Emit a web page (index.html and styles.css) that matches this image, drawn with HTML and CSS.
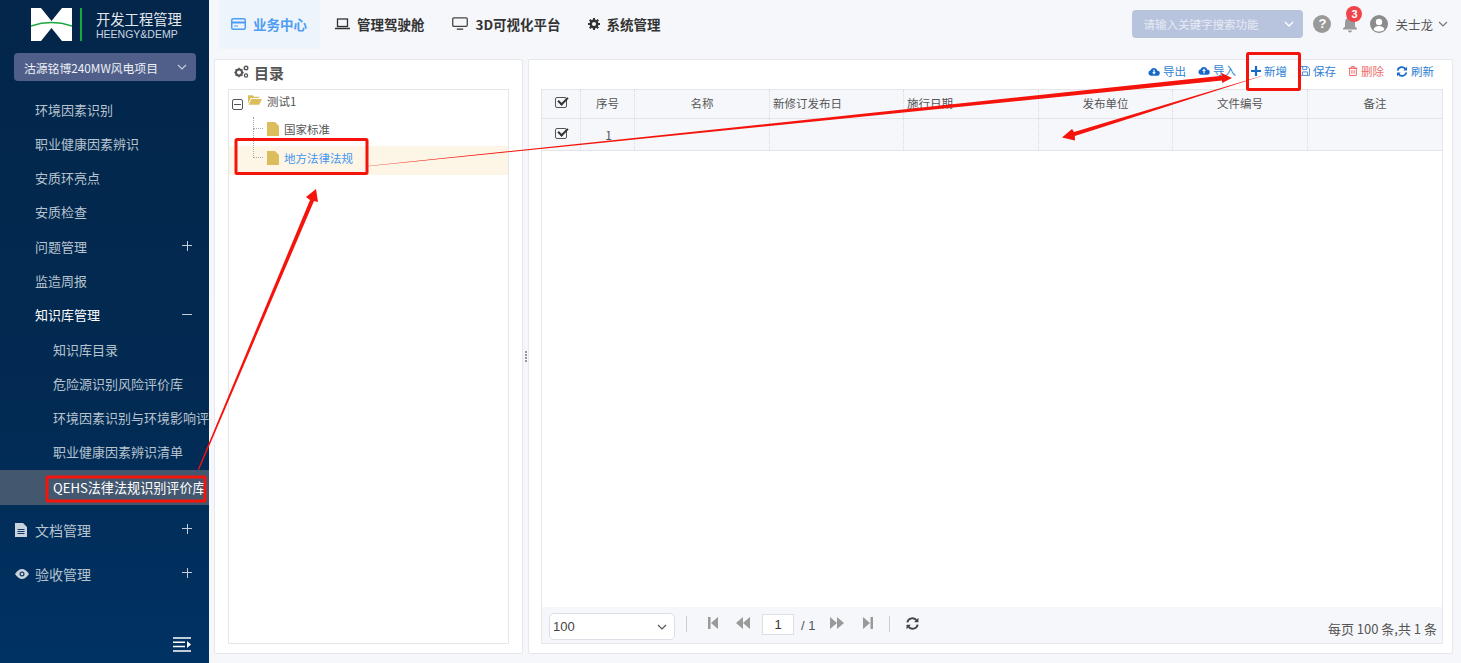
FILE: index.html
```html
<!DOCTYPE html>
<html lang="zh">
<head>
<meta charset="utf-8">
<title>开发工程管理</title>
<link rel="stylesheet" href="styles.css">
</head>
<body>
<div class="app">
  <aside class="sidebar">
    <div class="brand">
      <svg class="logo" viewBox="0 0 41 33"><path fill="#fff" d="M0 0h10l10.500 13L31 0h10v33H31L20.500 20 10 33H0z"/><path fill="none" stroke="#19a83c" stroke-width="1.500" d="M0 18Q20.500 11 41 18"/></svg>
      <span class="brand-bar"></span>
      <div class="brand-text"><div class="brand-cn">开发工程管理</div><div class="brand-en">HEENGY&amp;DEMP</div></div>
    </div>
    <div class="project"><span>沽源铭博240MW风电项目</span><svg class="chev" viewBox="0 0 10 6"><path d="M1 1l4 4 4-4" fill="none" stroke="#c5cce0" stroke-width="1.200"/></svg></div>
    <nav class="menu">
      <div class="mi">环境因素识别</div>
      <div class="mi">职业健康因素辨识</div>
      <div class="mi">安质环亮点</div>
      <div class="mi">安质检查</div>
      <div class="mi">问题管理<span class="sign plus"></span></div>
      <div class="mi">监造周报</div>
      <div class="mi open">知识库管理<span class="sign minus-sign"></span></div>
      <div class="mi sub">知识库目录</div>
      <div class="mi sub">危险源识别风险评价库</div>
      <div class="mi sub">环境因素识别与环境影响评</div>
      <div class="mi sub">职业健康因素辨识清单</div>
      <div class="mi sub active">QEHS法律法规识别评价库</div>
      <div class="mi top"><svg class="mi-ico" viewBox="0 0 12 14"><path fill="#c9d3de" d="M0 0h8l4 4v10H0z"/><path stroke="#143a63" d="M2.500 6.500h7M2.500 8.500h7M2.500 10.500h7"/></svg>文档管理<span class="sign plus"></span></div>
      <div class="mi top second"><svg class="mi-ico eye" viewBox="0 0 14 10"><path fill="#c9d3de" d="M0 5q7-10 14 0q-7 10-14 0z"/><circle cx="7" cy="5" r="2.500" fill="#143a63"/><circle cx="7" cy="5" r="1.300" fill="#c9d3de"/></svg>验收管理<span class="sign plus"></span></div>
    </nav>
    <svg class="collapse" viewBox="0 0 18 15"><path stroke="#fff" stroke-width="1.500" d="M0 1h18M0 5.300h12M0 9.600h12M0 14h18"/><path fill="#fff" d="M14 4l4 3.500-4 3.500z"/></svg>
  </aside>
  <div class="main">
    <header class="topbar">
      <div class="tab current"><svg class="tab-ico" viewBox="0 0 15 12"><rect x=".75" y=".75" width="13.500" height="10.500" rx="1.500" fill="none" stroke="#4d9df5" stroke-width="1.500"/><path stroke="#4d9df5" stroke-width="2" d="M1 4.500h13"/><path stroke="#4d9df5" d="M3 8h4"/></svg>业务中心</div>
      <div class="tab"><svg class="tab-ico" viewBox="0 0 15 12"><rect x="2.500" y="1" width="10" height="7.500" fill="none" stroke="#333" stroke-width="1.300"/><path stroke="#333" stroke-width="1.500" d="M0 10.500h15"/></svg>管理驾驶舱</div>
      <div class="tab"><svg class="tab-ico mon" viewBox="0 0 15 12"><rect x=".7" y=".7" width="13.600" height="8" rx="1" fill="none" stroke="#444" stroke-width="1.200"/><path stroke="#444" stroke-width="1.300" d="M4.500 11.300h6"/></svg>3D可视化平台</div>
      <div class="tab"><svg class="tab-ico gear" viewBox="0 0 14 14"><circle cx="7" cy="7" r="3.800" fill="none" stroke="#333" stroke-width="2.800"/><path stroke="#333" stroke-width="2.400" d="M7 0v2.500M7 11.500V14M0 7h2.500M11.500 7H14M2 2l2 2M10 10l2 2M12 2l-2 2M4 10l-2 2"/></svg>系统管理</div>
      <div class="tools">
        <div class="search"><span>请输入关键字搜索功能</span><svg class="chev" viewBox="0 0 10 6"><path d="M1 1l4 4 4-4" fill="none" stroke="#fff" stroke-width="1.300"/></svg></div>
        <span class="help">?</span>
        <div class="bell"><svg viewBox="0 0 16 18"><path fill="#9a9a9a" d="M8 1a1.500 1.500 0 0 1 1.500 1.500C12 3.300 13 5.500 13 8v3.500l2 2v1H1v-1l2-2V8c0-2.500 1-4.700 3.500-5.500A1.500 1.500 0 0 1 8 1zM6 15.500h4a2 2 0 0 1-4 0z"/></svg><span class="badge">3</span></div>
        <svg class="avatar" viewBox="0 0 18 18"><circle cx="9" cy="9" r="9" fill="#8c8c8c"/><circle cx="9" cy="7" r="3.200" fill="#fff"/><path fill="#fff" d="M3.500 14.500c1-3 3-3.500 5.500-3.500s4.500.5 5.500 3.500C13 16 11 16.500 9 16.500S5 16 3.500 14.500z"/></svg>
        <span class="uname">关士龙</span>
        <svg class="chev" viewBox="0 0 10 6"><path d="M1 1l4 4 4-4" fill="none" stroke="#777" stroke-width="1.200"/></svg>
      </div>
    </header>
    <div class="content">
      <section class="panel left">
        <div class="panel-title"><svg class="gears" viewBox="0 0 15 13"><circle cx="5" cy="7.500" r="3" fill="none" stroke="#555" stroke-width="2"/><path stroke="#555" stroke-width="1.600" d="M5 2.800v1.500M5 10.700v1.500M.3 7.500h1.500M8.200 7.500h1.500M1.700 4.200l1 1M7.300 9.800l1 1M8.300 4.200l-1 1M2.700 9.800l-1 1"/><circle cx="12" cy="3" r="1.800" fill="none" stroke="#555" stroke-width="1.400"/><circle cx="12" cy="10.500" r="1.600" fill="none" stroke="#555" stroke-width="1.300"/></svg>目录</div>
        <div class="tree">
          <div class="node root">
            <span class="minus"></span>
            <svg class="folder" viewBox="0 0 15 11"><path fill="#dcbd5c" d="M0 1h5l1.500 1.500H12V4H3L0 10z"/><path fill="#dcbd5c" d="M3.500 5H15l-3 6H.7z"/></svg>
            测试1
          </div>
          <div class="node leaf"><span class="dash"></span><svg class="file" viewBox="0 0 12 14"><path fill="#dcbd5c" d="M0 0h8l4 4v10H0z"/></svg>国家标准</div>
          <div class="node leaf sel"><span class="dash"></span><svg class="file" viewBox="0 0 12 14"><path fill="#dcbd5c" d="M0 0h8l4 4v10H0z"/></svg>地方法律法规</div>
        </div>
      </section>
      <div class="splitter"><i></i><i></i><i></i><i></i></div>
      <section class="panel right">
        <div class="toolbar">
          <span class="act"><svg class="ico" viewBox="0 0 14 11"><path fill="#1769c9" d="M3.500 10.500a3.300 3.300 0 0 1-.5-6.500 4.200 4.200 0 0 1 8 .5 3 3 0 0 1-.5 6z"/><path stroke="#fff" stroke-width="1.400" d="M7 3.500v4"/><path fill="#fff" d="M4.800 6.500h4.400L7 9z"/></svg>导出</span>
          <span class="act up"><svg class="ico" viewBox="0 0 14 11"><path fill="#1769c9" d="M3.500 10.500a3.300 3.300 0 0 1-.5-6.500 4.200 4.200 0 0 1 8 .5 3 3 0 0 1-.5 6z"/><path stroke="#fff" stroke-width="1.400" d="M7 5v4"/><path fill="#fff" d="M4.800 6h4.400L7 3.200z"/></svg>导入</span>
          <span class="act add"><svg class="ico small" viewBox="0 0 10 10"><path stroke="#1769c9" stroke-width="2.200" d="M5 0v10M0 5h10"/></svg>新增</span>
          <span class="act"><svg class="ico small" viewBox="0 0 11 11"><path fill="none" stroke="#4f8fd6" stroke-width="1.100" d="M.6.600h7.500l2.300 2.300v7.500H.6zM3 .8v3h4.500v-3M2.800 10V6.500h5.500V10"/></svg>保存</span>
          <span class="act del"><svg class="ico small" viewBox="0 0 10 11"><path fill="none" stroke="#ee6a6a" stroke-width="1.100" d="M1.300 2.500h7.400v8H1.300zM0 2.500h10M3.500 2.300V.6h3v1.700M3.800 4.500v4M6.200 4.500v4"/></svg>删除</span>
          <span class="act"><svg class="ico" viewBox="0 0 12 12"><path fill="none" stroke="#1769c9" stroke-width="1.800" d="M1.200 5A4.800 4.800 0 0 1 10 3.500M10.800 7A4.800 4.800 0 0 1 2 8.500"/><path fill="#1769c9" d="M11.500 .8v4h-4zM.5 11.200v-4h4z"/></svg>刷新</span>
        </div>
        <div class="grid-box">
          <div class="row head">
            <div class="c check"><span class="cb"></span></div><div class="c">序号</div><div class="c">名称</div><div class="c lead">新修订发布日</div><div class="c lead">施行日期</div><div class="c">发布单位</div><div class="c">文件编号</div><div class="c">备注</div>
          </div>
          <div class="row body">
            <div class="c check"><span class="cb"></span></div><div class="c num">1</div><div class="c"></div><div class="c"></div><div class="c"></div><div class="c"></div><div class="c"></div><div class="c"></div>
          </div>
          <div class="spacer"></div>
          <div class="pager">
            <div class="size"><span>100</span><svg class="chev" viewBox="0 0 10 6"><path d="M1 1l4 4 4-4" fill="none" stroke="#555" stroke-width="1.200"/></svg></div>
            <span class="sep"></span>
            <svg class="pg first" viewBox="0 0 10 12"><path fill="#9a9a9a" d="M0 0h2.500v12H0zM10 0v12L3 6z"/></svg>
            <svg class="pg prev" viewBox="0 0 14 12"><path fill="#9a9a9a" d="M7 0v12L0 6zM14 0v12L7 6z"/></svg>
            <span class="page-in">1</span>
            <span class="page-total">/ 1</span>
            <svg class="pg next" viewBox="0 0 14 12"><path fill="#9a9a9a" d="M0 0v12l7-6zM7 0v12l7-6z"/></svg>
            <svg class="pg last" viewBox="0 0 10 12"><path fill="#9a9a9a" d="M0 0v12l7-6zM7.500 0H10v12H7.500z"/></svg>
            <span class="sep two"></span>
            <svg class="pg reload" viewBox="0 0 12 12"><path fill="none" stroke="#444" stroke-width="1.800" d="M1.200 5A4.800 4.800 0 0 1 10 3.500M10.800 7A4.800 4.800 0 0 1 2 8.500"/><path fill="#444" d="M11.500 .8v4h-4zM.5 11.200v-4h4z"/></svg>
            <span class="summary">每页 100 条,共 1 条</span>
          </div>
        </div>
      </section>
    </div>
  </div>
</div>
<svg class="marks" viewBox="0 0 1461 663">
  <g fill="none" stroke="#f5140c" stroke-width="3">
    <rect x="47" y="477" width="158" height="24" rx="1"/>
    <rect x="236" y="139.500" width="131" height="34" rx="1"/>
    <rect x="1247.500" y="53.500" width="52" height="36" rx="1"/>
  </g>
  <g fill="#f5140c">
    <path d="M198 469L310 200l-4-3 10-8 2 13-4-1L199 470z"/>
    <path d="M368 166L1222 75.800l-1-3 11 5.200-10 5v-2.500L368 166.300z"/>
    <path d="M1262 75.800L1074 132l-2-3-10 8.500 13 3-.2-4.500L1262 76.100z"/>
  </g>
</svg>
</body>
</html>
```

FILE: styles.css
```css
* { box-sizing: border-box; }
html, body { margin: 0; height: 100%; overflow: hidden; }
body { font-family: "Noto Sans CJK SC", "Noto Sans", sans-serif; font-size: 12px; color: #555; background: #f5f7fb; }
.app { display: flex; height: 663px; }
.sidebar { width: 209px; flex: none; position: relative; display: flex; flex-direction: column; background: linear-gradient(180deg, #03264a 0%, #022a52 60%, #003264 100%); color: #b7c3cf; }
.brand { display: flex; align-items: center; height: 53px; padding: 0 0 4px 31px; }
.logo { width: 41px; height: 33px; flex: none; }
.brand-bar { width: 2px; height: 33px; background: #19a83c; margin: 0 14px 0 8px; }
.brand-cn { font-size: 14.300px; line-height: 19px; color: #e4e8ee; white-space: nowrap; }
.brand-en { font-family: "Liberation Sans", sans-serif; font-size: 10.500px; line-height: 13px; color: #cdd5e2; white-space: nowrap; }
.project { display: flex; align-items: center; justify-content: space-between; width: 182px; height: 28px; margin-left: 14px; padding: 0 9px 0 10px; border-radius: 4px; background: #4f5f8a; color: #eef0f5; font-size: 11.800px; white-space: nowrap; }
.chev { width: 10px; height: 6px; flex: none; }
.menu { margin-top: 11.500px; font-size: 13px; }
.mi { position: relative; height: 34.300px; line-height: 34.300px; padding-left: 35px; white-space: nowrap; }
.mi.open { color: #fff; }
.mi.sub { padding-left: 53px; }
.mi.active { background: #43586f; color: #fff; height: 35px; line-height: 35px; font-size: 13.100px; }
.mi.top { font-size: 14px; height: 36px; line-height: 36px; margin-top: 7px; }
.mi.top.second { margin-top: 8px; }
.mi-ico { position: absolute; left: 15px; top: 11px; width: 12px; height: 14px; }
.mi-ico.eye { width: 14px; height: 10px; top: 13px; }
.sign { position: absolute; right: 17px; top: 50%; width: 10px; height: 10px; margin-top: -6px; }
.sign::before { content: ""; position: absolute; left: 0; right: 0; top: 4.500px; height: 1px; background: #c3ced9; }
.plus::after { content: ""; position: absolute; top: 0; bottom: 0; left: 4.500px; width: 1px; background: #c3ced9; }
.collapse { position: absolute; left: 173px; top: 637px; width: 18px; height: 15px; }
.main { flex: 1; min-width: 0; display: flex; flex-direction: column; }
.topbar { height: 49px; display: flex; align-items: center; padding-left: 10px; background: #f6f7fb; }
.tab { height: 49px; display: flex; align-items: center; padding: 0 13px 2px 13px; margin-right: 1px; font-size: 13.500px; font-weight: 700; color: #333; white-space: nowrap; }
.tab.current { width: 101px; margin-right: 2px; padding-left: 12px; background: #eef4fc; color: #4d9df5; }
.tab-ico { width: 15px; height: 12px; margin-right: 7px; flex: none; }
.tab-ico.mon { width: 16px; height: 13px; margin-right: 8px; }
.tab-ico.gear { width: 12px; height: 12px; }
.tools { margin-left: auto; display: flex; align-items: center; padding-right: 13px; padding-bottom: 1px; }
.search { width: 171px; height: 28px; display: flex; align-items: center; justify-content: space-between; padding: 0 9px 0 11px; border-radius: 4px; background: #b8c3de; color: #e6ebf4; font-size: 11.500px; }
.help { width: 18px; height: 18px; margin-left: 10px; border-radius: 50%; background: #999; color: #fff; font: 700 13px/18px "Liberation Sans", sans-serif; text-align: center; }
.bell { position: relative; width: 17px; height: 19px; margin-left: 11px; }
.bell svg { display: block; width: 16px; height: 18px; }
.badge { position: absolute; left: 4px; top: -9px; min-width: 16px; height: 16px; border-radius: 8px; background: #f0434a; color: #fff; font: 700 11px/16px "Liberation Sans", sans-serif; text-align: center; }
.avatar { width: 18px; height: 18px; margin-left: 11px; }
.uname { margin: 0 5px 0 7px; font-size: 12.500px; color: #555; }
.content { flex: 1; display: flex; padding: 10px 8px 9px 5px; min-height: 0; }
.panel { background: #fff; border: 1px solid #e6e8ee; border-radius: 2px; display: flex; flex-direction: column; }
.panel.left { width: 309px; flex: none; padding: 0 13px 9px 13px; }
.panel.right { flex: 1; min-width: 0; padding: 0 9px 9px 12px; }
.panel-title { height: 29px; display: flex; align-items: center; padding: 0 0 4px 6px; font-size: 15px; font-weight: 700; color: #555; }
.gears { width: 15px; height: 13px; margin-right: 5px; margin-top: -2px; }
.tree { flex: 1; border: 1px solid #e4e6ea; color: #555; }
.node { display: flex; align-items: center; white-space: nowrap; position: relative; font-size: 11.500px; padding-bottom: 6px; }
.root { height: 27px; padding-left: 3px; }
.minus { width: 11px; height: 11px; border: 1px solid #555; border-radius: 2px; margin: 8px 5px 0 0; position: relative; }
.minus::after { content: ""; position: absolute; left: 1px; right: 1px; top: 4px; height: 1px; background: #555; }
.folder { width: 14px; height: 11px; margin: -3px 5px 0 0; }
.leaf { height: 29px; padding-left: 38px; }
.leaf.sel { background: #fdf6e6; color: #3f95ee; }
.dash { position: absolute; left: 24px; top: 0; height: 12px; width: 10px; border-left: 1px dotted #aaa; border-bottom: 1px dotted #aaa; }
.sel .dash { top: -17px; height: 29px; }
.file { width: 12px; height: 14px; margin-right: 5px; }
.toolbar { height: 29px; display: flex; justify-content: flex-end; align-items: center; gap: 12px; padding-right: 9px; padding-bottom: 7px; font-size: 11.500px; color: #2f7fd4; }
.act { display: flex; align-items: center; white-space: nowrap; }
.act.up { margin-top: -2px; margin-right: 3px; }
.act.add { margin-right: 1px; }
.act.del { color: #ee6a6a; }
.ico { width: 12px; height: 11px; margin-right: 3px; flex: none; }
.ico.small { width: 10px; height: 10px; }
.grid-box { flex: 1; min-height: 0; display: flex; flex-direction: column; border: 1px solid #e4e6ea; }
.row { display: grid; grid-template-columns: 39px 54px 135px 134px 135px 134px 135px 1fr; }
.row.head { height: 29px; padding-bottom: 0; background: #f5f7fb; border-bottom: 1px solid #e2e4ea; }
.row.body { height: 32px; background: #f5f7fb; border-bottom: 1px solid #e2e4ea; }
.c { display: flex; align-items: center; justify-content: center; font-size: 11.500px; color: #555; border-right: 1px dotted #d8dbe2; white-space: nowrap; }
.head .c { padding-bottom: 2px; }
.c.lead { justify-content: flex-start; padding-left: 3px; }
.c:last-child { border-right: 0; }
.num { font-size: 12px; padding-left: 2px; }
.cb { position: relative; width: 12px; height: 11px; border: 1px solid #555; border-radius: 2px; margin-top: -2px; }
.cb::after { content: ""; position: absolute; left: 2px; top: -1px; width: 8px; height: 4px; border-left: 2px solid #333; border-bottom: 2px solid #333; transform: rotate(-45deg); }
.spacer { flex: 1; }
.pager { height: 36px; display: flex; align-items: center; background: #f5f7fb; padding-left: 7px; padding-right: 5px; color: #555; }
.size { width: 126px; height: 27px; margin-top: 3px; display: flex; align-items: center; justify-content: space-between; padding: 0 7px 0 3px; border: 1px solid #dcdfe6; border-radius: 5px; background: #fff; font-size: 13px; color: #444; font-family: "Liberation Sans", sans-serif; }
.sep { width: 1px; height: 16px; background: #c9ccd3; margin-left: 11px; margin-top: -2px; }
.sep.two { margin-left: 16px; }
.pg { height: 12px; flex: none; margin-top: -4px; }
.first { width: 10px; margin-left: 21px; }
.prev { width: 14px; margin-left: 18px; }
.next { width: 14px; margin-left: 15px; }
.last { width: 10px; margin-left: 19px; }
.reload { width: 13px; height: 13px; margin-left: 16px; }
.page-in { width: 32px; height: 21px; margin-left: 12px; margin-top: -1px; background: #fff; border: 1px solid #dcdfe6; text-align: center; font: 13px/19px "Liberation Sans", sans-serif; color: #333; }
.page-total { margin-left: 7px; font: 13px "Liberation Sans", sans-serif; color: #555; }
.summary { margin-left: auto; font-size: 13px; padding-top: 6px; white-space: nowrap; }
.splitter { width: 5px; flex: none; display: flex; flex-direction: column; align-items: center; justify-content: center; gap: 1px; }
.splitter i { width: 2px; height: 2px; background: #999; }
.marks { position: absolute; left: 0; top: 0; width: 1461px; height: 663px; pointer-events: none; }
```
